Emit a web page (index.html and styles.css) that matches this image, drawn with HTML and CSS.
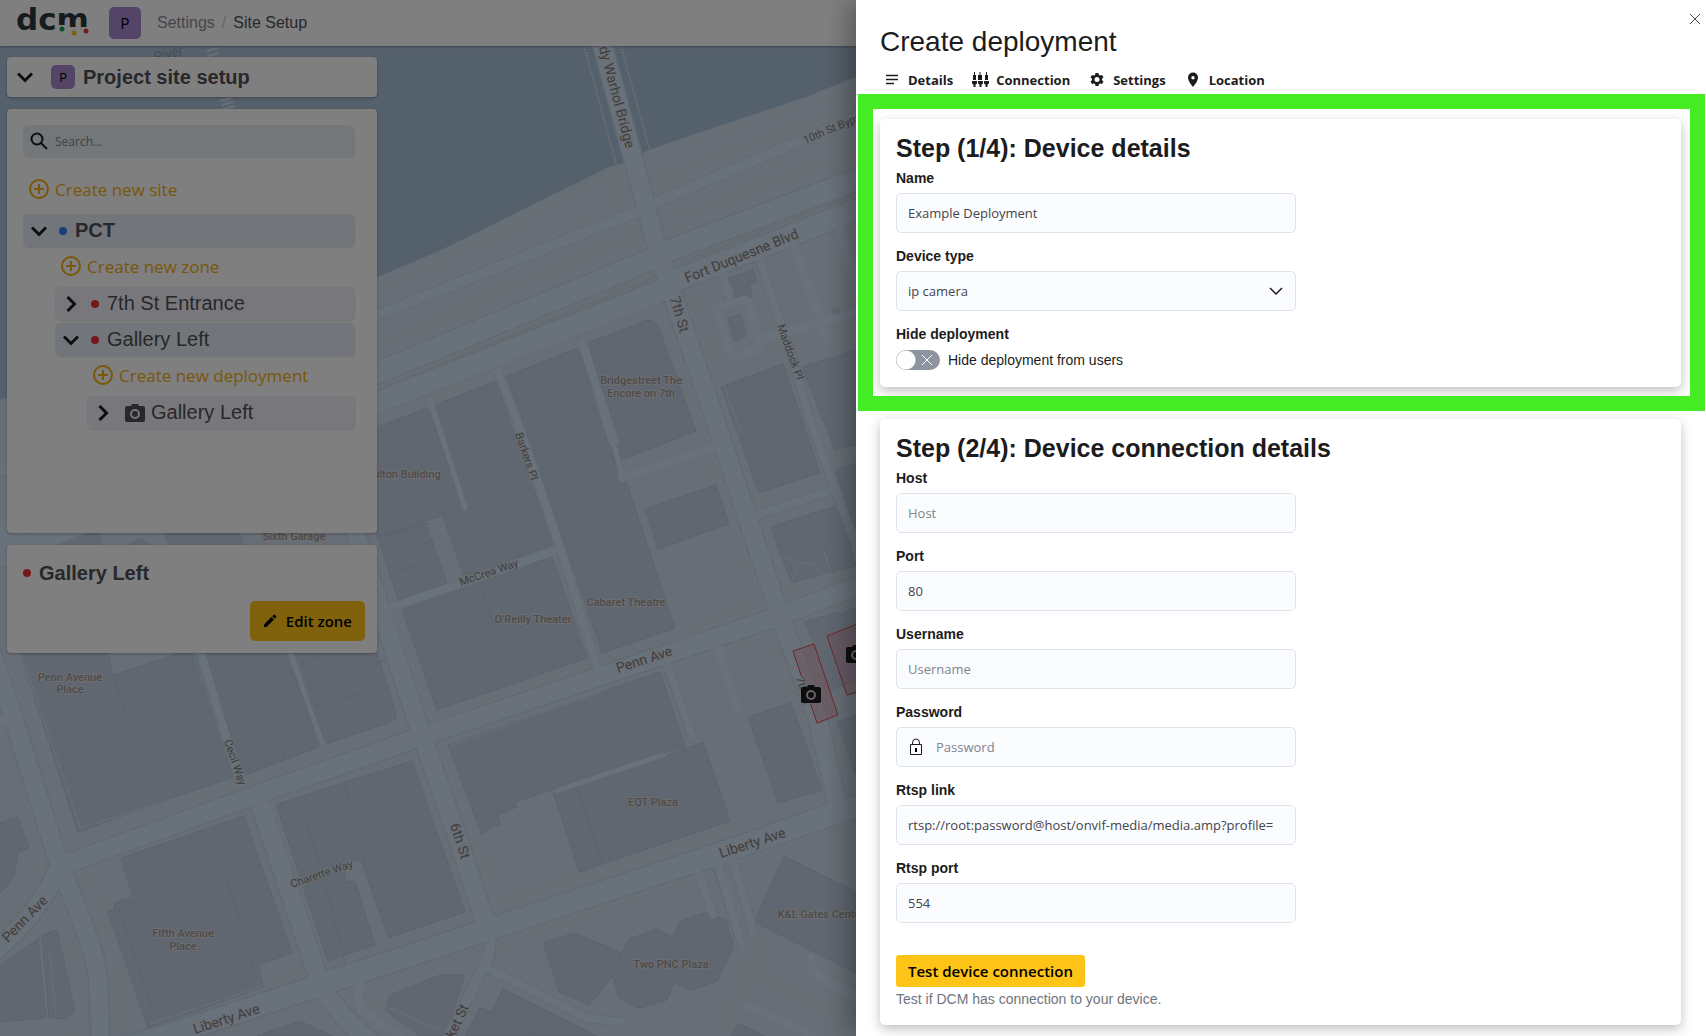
FILE: index.html
```html
<!DOCTYPE html>
<html lang="en">
<head>
<meta charset="utf-8">
<meta name="viewport" content="width=device-width, initial-scale=1">
<title>Site Setup</title>
<link rel="stylesheet" href="styles.css">
</head>
<body>
<div class="app">
  <header class="topbar">
    <a href="#" class="logo" aria-label="dcm home">
      <svg width="76" height="36" viewBox="0 0 76 36">
        <text class="logo-text" x="0" y="25">dcm</text>
        <path class="logo-gap" d="M42 20h9v8h-9ZM53 22h9v6h-9ZM65 22h10v6h-10Z"/>
        <circle cx="46" cy="24" r="2.500" fill="#17a04c"/>
        <circle cx="58" cy="28" r="2.500" fill="#f0c419"/>
        <circle cx="70" cy="26" r="2.500" fill="#e63b3b"/>
      </svg>
    </a>
    <span class="avatar">P</span>
    <nav class="crumbs" aria-label="Breadcrumb">
      <a href="#">Settings</a><span class="slash">/</span><a href="#" class="current">Site Setup</a>
    </nav>
  </header>

  <main class="stage">
    <svg class="map" viewBox="0 46 1706 990" preserveAspectRatio="xMinYMin slice" role="img" aria-label="Site map">
      <rect class="land" x="0" y="46" width="1706" height="990"/>
      <path class="water" d="M0 400 377 277 437 252 607 168 623 163 643 153 677 140 803 98 856 77 1000 20 0 20Z"/>
      <g class="buildings">
        <path d="M377 427 428 408 464 508 377 537Z"/>
        <path d="M378 537 425 522 447 583 398 600Z"/>
        <path d="M433 406 496 381 553 545 464 576 443 517 467 508Z"/>
        <path d="M507 376 578 348 612 447 610 452 618 468 627 483 675 628 602 653Z"/>
        <path d="M587 343 638 324Q650 315 658 326L696 431 616 462 610 452 621 443Z"/>
        <path d="M721 387 783 364 820 473 759 493Z"/>
        <path d="M802 367 856 350 856 445 835 450Z"/>
        <path d="M645 509 716 485 729 524 658 549Z"/>
        <path d="M402 610 552 557 587 658 437 710Z"/>
        <path d="M771 527 823 510 837 506 856 565 832 573 827 555 817 536 778 548Z"/>
        <path d="M778 548 817 535 829 572 792 583Z"/>
        <path d="M835 470 856 463 856 530Z"/>
        <path d="M805 622 837 612 840 614 856 608 856 680 830 690Z"/>
        <path d="M448 745 660 672 685 747 663 753 515 802 517 807 498 815 501 825 490 828 482 835Z"/>
        <path d="M553 792 613 772 663 757 703 742 730 821 579 872Z"/>
        <path d="M748 717 791 703 822 790 778 803Z"/>
        <path d="M837 722 856 715 856 775Z"/>
        <path d="M290 653 377 653 396 713Q397 720 390 722L327 744Z"/>
        <path d="M203 653 286 653 321 746 245 775Z"/>
        <path d="M20 653 108 653 113 675 180 653 191 653 233 777 78 832Z"/>
        <path d="M276 804 412 761 465 912 388 938 361 859 345 866 345 882 355 881 375 945 328 961Z"/>
        <path d="M121 858 244 816 292 953 258 965 264 987 148 1028 108 912 115 909 114 903 133 897Z"/>
        <path d="M0 823 18 817 29 848 17 853Q18 880 0 893Z"/>
        <path d="M42 935 57 930 75 1011 63 1019 49 1017Z"/>
        <path d="M0 965Q50 930 38 940L46 1018 0 1022Z"/>
        <path d="M543 943 574 933 622 953 613 976 589 1005 559 992Z"/>
        <path d="M622 953 629 939 657 929 673 937 679 922 707 912 726 920 734 947 717 981 690 990 674 983 667 1000 639 1008 619 998 613 976Z"/>
        <path d="M784 856 856 892 856 973 754 922Z"/>
        <path d="M503 989 597 1036 465 1036 480 1008 491 1012Z"/>
        <path d="M738 1023 765 1036 731 1036Z"/>
        <path d="M257 1036 300 1021 333 1036Z"/>
        <path d="M390 995 440 975 465 975 445 1036 420 1036 385 1010Z"/>
        <path d="M20 548 66 534 100 534 100 548Z"/>
        <path d="M122 548 140 538 154 548Z"/>
        <path d="M165 534 240 534 245 548 170 548Z"/>
        <path d="M724 295 750 286 752 296 727 302ZM728 278 753 270 757 282 734 290Z"/>
        <path d="M728 318 740 314 747 336 734 341ZM831 311 838 308 840 313 834 315Z"/>
      </g>
      <g class="plots">
        <path d="M538 470 612 444M578 577 648 553M443 517 530 488M480 583 514 681M113 675 158 805M248 653 285 760M298 801 322 870 349 980M344 783 370 855M384 537 430 523M388 555 434 540M394 572 440 558M300 662 377 640M307 684 385 660M315 707 390 685M577 784 602 864M118 908 225 872 255 972 152 1010ZM745 450 803 430M820 420 856 408M491 1012 540 1036"/>
      </g>
      <g class="casing">
        <path class="w22" d="M-10 537 377 373 650 260 670 250 856 180 980 135M-10 560 377 403 663 290 677 280 856 210 980 165"/>
        <path class="w22" d="M100 1056 227 1016 320 985 430 949 487 930 730 850 830 815 900 792"/>
        <path class="w18" d="M590 0 603 47 657 247 670 287 715 420 777 607 818 720 837 803"/>
        <path class="w18" d="M250 210 357 537 395 653 420 730 455 830 487 927"/>
        <path class="w18" d="M60 866 250 797 420 737 643 662 777 617 900 570M-18 625 10 707 57 857Q86 930 95 960 100 980 100 1046M62 860Q40 915 -10 955M257 795 320 983Q332 1010 380 1050"/>
        <path class="w11" d="M-10 475 377 315 637 212M657 202 856 117 900 98"/>
        <path class="w8" d="M498 373 517 420 560 547 597 667M393 607 557 550M197 653 240 783M810 420 856 547M760 260 793 360 810 420M667 667 692 735M697 873 713 915M717 867 742 945M733 862 753 930M757 515 833 490M487 968 587 1018 620 1022"/>
        <path class="w11" d="M490 940Q492 955 483 967L445 1046"/>
      </g>
      <g class="roads">
        <path class="w8" d="M498 373 517 420 560 547 597 667M393 607 557 550M197 640 240 783M666 662 692 735M716 642 738 710M583 343 613 443M622 478 718 446M757 515 833 490M760 260 793 360 810 420 837 493 858 550M795 247 828 342M722 272 731 303M717 307 743 300Q748 299 749 303L760 342Q761 348 756 350L736 356Q731 357 730 352L717 312ZM760 340 858 312M697 870 713 915M717 862 742 945M732 858 753 930M487 968 587 1018 620 1022M810 957Q810 972 820 978L860 998M750 1007 813 1036M361 983Q354 1000 362 1010L404 1040M-10 725 16 715"/>
        <path class="w5" d="M430 400 437 420 465 508M556 791 663 755M291 653 322 744M615 448 622 478"/>
        <path class="w11" d="M840 230 862 300M490 935Q492 955 483 967L445 1046M-10 475 377 315 637 212M657 202 856 117 900 98"/>
        <path class="w18" d="M60 866 250 797 420 737 643 662 777 617 900 570M-18 625 10 707 57 857Q86 930 95 960 100 980 100 1046M62 860Q40 915 -10 955M257 795 320 983Q332 1010 380 1050M250 210 357 537 395 653 420 730 455 830 487 927"/>
        <path class="w18" d="M590 0 603 47 657 247 670 287 715 420 777 607 818 720 837 803"/>
        <path class="w22" d="M-10 537 377 373 650 260 670 250 856 180 980 135M-10 560 377 403 663 290 677 280 856 210 980 165M100 1056 227 1016 320 985 430 949 487 930 730 850 830 815 900 792"/>
      </g>
      <path class="median" d="M377 390 655 277M678 264 856 194"/>
      <g class="paths">
        <path d="M584 46 616 163 634 250M621 46 650 151 661 195M377 287 440 262 620 169M645 152 856 86M377 345 620 240M662 177 856 105M668 205 690 213 856 152M377 417 660 303M660 306 697 430M692 300 740 430M708 453 765 605M735 430 788 590M392 612 432 722 590 665M380 745 610 672 760 602M450 746 600 692M22 655 80 828 230 782M270 803 328 970M275 803 415 757M440 745 495 905 730 830M500 940 700 875M90 870 128 1036M50 955 56 1018M62 900 75 960 78 1036M150 1024 265 985 310 970M788 617 840 780M800 620 856 600M753 930 758 950 720 1036M752 970 840 1020M782 555 797 565 792 585M797 562 815 565 823 575M378 1003 440 1030"/>
      </g>
      <path class="steps" d="M207 51 218 48M208 56 219 53M220 101 231 98M222 105 233 102M223 109 235 106"/>
      <g class="zones">
        <path d="M793 651 814 644 838 715 817 723Z"/>
        <path d="M827 636 880 615 900 680 847 695Z"/>
      </g>
      <g class="street big">
        <text text-anchor="end" transform="translate(626 149) rotate(75)">Andy Warhol Bridge</text>
        <text transform="translate(687 283) rotate(-22)">Fort Duquesne Blvd</text>
        <text transform="translate(670 298) rotate(74)">7th St</text>
        <text transform="translate(618 673) rotate(-18)">Penn Ave</text>
        <text transform="translate(8 943) rotate(-46)">Penn Ave</text>
        <text transform="translate(195 1034) rotate(-18)">Liberty Ave</text>
        <text transform="translate(721 858) rotate(-18)">Liberty Ave</text>
        <text transform="translate(450 825) rotate(72)">6th St</text>
        <text text-anchor="end" transform="translate(469 1007) rotate(-65)">Market St</text>
      </g>
      <g class="street">
        <text transform="translate(805 144) rotate(-23)">10th St Bypass</text>
        <text transform="translate(777 326) rotate(70)">Maddock Pl</text>
        <text transform="translate(515 434) rotate(71)">Barkers Pl</text>
        <text transform="translate(461 586) rotate(-19)">McCrea Way</text>
        <text transform="translate(224 741) rotate(71)">Cecil Way</text>
        <text transform="translate(292 888) rotate(-19)">Charette Way</text>
        <text transform="translate(796 678) rotate(72)">7th St</text>
      </g>
      <g class="place">
        <text x="641" y="384">Bridgestreet The</text><text x="641" y="397">Encore on 7th</text>
        <text x="404" y="478">Fulton Building</text>
        <text x="626" y="606">Cabaret Theatre</text>
        <text x="533" y="623">O’Reilly Theater</text>
        <text x="70" y="681">Penn Avenue</text><text x="70" y="693">Place</text>
        <text x="183" y="937">Fifth Avenue</text><text x="183" y="950">Place</text>
        <text x="653" y="806">EQT Plaza</text>
        <text x="671" y="968">Two PNC Plaza</text>
        <text x="821" y="918">K&amp;L Gates Center</text>
        <text x="294" y="540">Sixth Garage</text>
      </g>
      <text class="river" transform="translate(155 62) rotate(-14)">River</text>
      <g class="pins">
        <path d="M803 687h4l1-2h6l1 2h4a2 2 0 0 1 2 2v12a2 2 0 0 1-2 2h-16a2 2 0 0 1-2-2v-12a2 2 0 0 1 2-2Z"/>
        <circle cx="811" cy="695" r="4"/>
        <path d="M848 647h4l1-2h6l1 2h4a2 2 0 0 1 2 2v12a2 2 0 0 1-2 2h-16a2 2 0 0 1-2-2v-12a2 2 0 0 1 2-2Z"/>
        <circle cx="856" cy="655" r="4"/>
      </g>
    </svg>

    <aside class="sidebar">
      <section class="panel project">
        <button class="chev" aria-label="Collapse project"><svg width="16" height="16" viewBox="0 0 16 16"><path d="M1 4.500 8 11.500 15 4.500"/></svg></button>
        <span class="avatar small">P</span>
        <h1 class="heading">Project site setup</h1>
      </section>

      <section class="panel tree">
        <label class="search">
          <svg width="18" height="18" viewBox="0 0 18 18"><circle cx="7" cy="7" r="5.500"/><path d="M11 11 17 17"/></svg>
          <input type="search" placeholder="Search..." aria-label="Search">
        </label>
        <button class="create top"><svg width="20" height="20" viewBox="0 0 20 20"><circle cx="10" cy="10" r="9"/><path d="M10 5v10M5 10h10"/></svg>Create new site</button>
        <ul class="branch">
          <li>
            <button class="row open strong"><svg class="arrow" width="16" height="16" viewBox="0 0 16 16"><path d="M1 4.500 8 11.500 15 4.500"/></svg><i class="dot blue"></i>PCT</button>
            <ul class="branch nested">
              <li><button class="create"><svg width="20" height="20" viewBox="0 0 20 20"><circle cx="10" cy="10" r="9"/><path d="M10 5v10M5 10h10"/></svg>Create new zone</button></li>
              <li><button class="row"><svg class="arrow" width="16" height="16" viewBox="0 0 16 16"><path d="M4.500 1 11.500 8 4.500 15"/></svg><i class="dot"></i>7th St Entrance</button></li>
              <li>
                <button class="row open"><svg class="arrow" width="16" height="16" viewBox="0 0 16 16"><path d="M1 4.500 8 11.500 15 4.500"/></svg><i class="dot"></i>Gallery Left</button>
                <ul class="branch nested">
                  <li><button class="create"><svg width="20" height="20" viewBox="0 0 20 20"><circle cx="10" cy="10" r="9"/><path d="M10 5v10M5 10h10"/></svg>Create new deployment</button></li>
                  <li><button class="row device"><svg class="arrow" width="16" height="16" viewBox="0 0 16 16"><path d="M4.500 1 11.500 8 4.500 15"/></svg><svg class="camera" width="20" height="18" viewBox="0 0 20 18"><path fill-rule="evenodd" d="M2 2h4l1-2h6l1 2h4a2 2 0 0 1 2 2v12a2 2 0 0 1-2 2H2a2 2 0 0 1-2-2V4a2 2 0 0 1 2-2Zm8 3a5 5 0 1 0 0 10 5 5 0 0 0 0-10Zm0 2a3 3 0 1 1 0 6 3 3 0 0 1 0-6Z"/></svg>Gallery Left</button></li>
                </ul>
              </li>
            </ul>
          </li>
        </ul>
      </section>

      <section class="panel zone">
        <h2 class="heading"><i class="dot"></i>Gallery Left</h2>
        <button class="btn edit"><svg width="14" height="14" viewBox="0 0 14 14"><path d="M1 10.500 8.500 3l2.500 2.500L3.500 13H1ZM9.300 2.200 10.800.800q.5-.5 1 0l1.400 1.400q.5.500 0 1L11.800 4.700Z"/></svg>Edit zone</button>
      </section>
    </aside>
  </main>
</div>

<div class="scrim"></div>

<section class="drawer" role="dialog" aria-labelledby="drawer-title">
  <button class="close" aria-label="Close"><svg width="12" height="12" viewBox="0 0 12 12"><path d="M1 1 11 11M11 1 1 11"/></svg></button>
  <h2 class="drawer-title" id="drawer-title">Create deployment</h2>
  <nav class="tabs" aria-label="Steps">
    <a href="#details"><svg width="20" height="16" viewBox="0 0 20 16"><path fill="none" stroke="currentColor" stroke-width="1.400" d="M4 3.500h12M4 7.500h12M4 11.500h8"/></svg>Details</a>
    <a href="#connection"><svg width="20" height="16" viewBox="0 0 20 16"><path d="M4 0h1v3h1v5H3V3h1ZM9.500 0h1v3h1.500v5H8V3h1.500ZM16 0h1v3h1v5h-3V3h1ZM2 9h5v2q0 1-1.500 1.500V15h-2v-2.500Q2 12 2 11ZM8 9h5v2q0 1-1.500 1.500V15h-2v-2.500Q8 12 8 11ZM14 9h5v2q0 1-1.500 1.500V15h-2v-2.500Q14 12 14 11Z"/></svg>Connection</a>
    <a href="#settings"><svg width="20" height="16" viewBox="0 0 20 16"><path fill-rule="evenodd" d="M8.500 1h3l.4 1.900 1.300.7 1.800-.7 1.500 2.600-1.500 1.200v1.600l1.500 1.200-1.500 2.600-1.800-.7-1.300.7-.4 1.900h-3l-.4-1.900-1.300-.7-1.800.7-1.500-2.600L5 8.300V6.700L3.500 5.500 5 2.900l1.800.7 1.300-.7ZM10 5a2.500 2.500 0 1 0 0 5 2.500 2.500 0 0 0 0-5Z"/></svg>Settings</a>
    <a href="#location"><svg width="20" height="16" viewBox="0 0 20 16"><path fill-rule="evenodd" d="M10 0.500a5 5 0 0 1 5 5Q15 9 10 15 5 9 5 5.500a5 5 0 0 1 5-5Zm0 3.500a1.700 1.700 0 1 0 0 3.400 1.700 1.700 0 0 0 0-3.400Z"/></svg>Location</a>
  </nav>
  <form class="steps-form">
    <section class="card" id="details">
      <h3>Step (1/4): Device details</h3>
      <div class="field"><label for="name">Name</label><input id="name" type="text" value="Example Deployment"></div>
      <div class="field"><label for="type">Device type</label>
        <div class="select"><select id="type"><option>ip camera</option></select><svg width="14" height="10" viewBox="0 0 14 10"><path stroke-width="1.500" d="M1 2 7 8 13 2"/></svg></div>
      </div>
      <div class="field"><span class="label">Hide deployment</span>
        <label class="switch"><span class="track"><input type="checkbox"><svg width="12" height="12" viewBox="0 0 12 12"><path d="M1 1 11 11M11 1 1 11"/></svg></span>Hide deployment from users</label>
      </div>
      <div class="highlight"></div>
    </section>
    <section class="card" id="connection">
      <h3>Step (2/4): Device connection details</h3>
      <div class="field"><label for="host">Host</label><input id="host" type="text" placeholder="Host"></div>
      <div class="field"><label for="port">Port</label><input id="port" type="text" value="80"></div>
      <div class="field"><label for="user">Username</label><input id="user" type="text" placeholder="Username"></div>
      <div class="field"><label for="pass">Password</label>
        <div class="secret"><svg width="14" height="18" viewBox="0 0 14 18"><path fill="none" stroke="currentColor" d="M1.500 6.500h11v10h-11ZM3.500 6.500V5Q3.500 1 7 1t3.500 4v1.500"/><rect x="6" y="10" width="2" height="4"/></svg><input id="pass" type="password" placeholder="Password"></div>
      </div>
      <div class="field"><label for="link">Rtsp link</label><input id="link" type="text" value="rtsp://root:password@host/onvif-media/media.amp?profile="></div>
      <div class="field"><label for="rport">Rtsp port</label><input id="rport" type="text" value="554"></div>
      <div class="test"><button type="button" class="btn">Test device connection</button><p>Test if DCM has connection to your device.</p></div>
    </section>
  </form>
</section>
</body>
</html>
```
FILE: styles.css
```css
:root {
  --arial: "Liberation Sans", Arial, sans-serif;
  --ui: "Open Sans", "Noto Sans", sans-serif;
  --ink: #1c1c20;
  --yellow: #fec417;
}
* { box-sizing: border-box; }
body { margin: 0; height: 100vh; overflow: hidden; font-family: var(--arial); font-size: 14px; color: var(--ink); }
button { border: 0; background: none; padding: 0; font: inherit; color: inherit; cursor: pointer; }
a { color: inherit; text-decoration: none; }
h1, h2, h3, p, ul { margin: 0; padding: 0; }
ul { list-style: none; }
svg { display: block; flex: none; }

.app { display: flex; flex-direction: column; height: 100%; }
.topbar { display: flex; align-items: center; height: 46px; padding: 0 16px; background: #fff; position: relative; z-index: 1; box-shadow: 0 1px 2px rgba(60, 60, 80, .4); }
.logo { margin-right: 17px; }
.logo svg { overflow: visible; }
.logo-text { font: 700 31px "DejaVu Sans", sans-serif; fill: #2c363c; }
.logo-gap { fill: #fff; }
.avatar { display: grid; place-items: center; width: 32px; height: 32px; border-radius: 5px; background: #a98bd0; color: #000; font: 14px Inter, sans-serif; }
.avatar.small { width: 24px; height: 24px; font-size: 12px; }
.crumbs { display: flex; gap: 7px; margin-left: 16px; font-size: 16px; color: #8c8c98; }
.slash { color: #c8c8d0; }
.current { color: #50505a; }

.stage { position: relative; flex: 1; min-height: 0; }
.map { position: absolute; inset: 0; width: 100%; height: 100%; }
.land { fill: #cedcea; }
.water { fill: #a9c0d6; }
.buildings path { fill: #c2cee2; stroke: #bac7da; }
.plots path { fill: none; stroke: #b9c5d8; }
.casing path, .roads path { fill: none; stroke-linejoin: round; }
.casing path { stroke: #c0d6e2; }
.roads path { stroke: #d2e2f6; stroke-linecap: round; }
.roads .w22 { stroke-width: 21px; }
.roads .w18 { stroke-width: 18px; }
.roads .w11 { stroke-width: 10px; }
.roads .w8 { stroke-width: 8px; }
.roads .w5 { stroke-width: 5px; }
.casing .w22 { stroke-width: 24px; }
.casing .w18 { stroke-width: 21px; }
.casing .w11 { stroke-width: 12px; }
.casing .w8 { stroke-width: 10px; }
.median { fill: none; stroke: #c8d8e2; stroke-width: 2px; }
.paths path { fill: none; stroke: #d6e0ee; stroke-width: 2px; stroke-dasharray: 2 1; opacity: .8; }
.steps { fill: none; stroke: #d6e0ee; stroke-width: 2px; }
.zones path { fill: rgba(230, 120, 140, .3); stroke: #e04a58; }
.map text { font-family: Roboto, sans-serif; paint-order: stroke; stroke: #d6dfe8; stroke-width: 2px; stroke-linejoin: round; fill: #807c7c; }
.street { font-size: 11px; }
.big { font-size: 14px; }
.place { font-size: 11px; font-weight: 500; text-anchor: middle; }
.map .place text { fill: #9c9694; stroke: #d8dce2; }
.map .river { font-size: 14px; font-style: italic; fill: #8c9ea8; stroke: none; }
.pins path { fill: #1c1c1c; }
.pins circle { fill: none; stroke: #c8c8d0; stroke-width: 2px; }

.sidebar { position: relative; display: flex; flex-direction: column; gap: 12px; width: 384px; padding: 11px 7px; color: #505054; }
.panel { background: #fff; border-radius: 4px; box-shadow: 0 1px 3px rgba(0, 0, 0, .25); }
.heading { display: flex; align-items: center; font-size: 20px; font-weight: 700; line-height: 24px; }
.project { display: flex; align-items: center; height: 40px; padding: 0 9px; }
.project .avatar { margin: 0 8px 0 17px; }
.chev, .arrow { color: #1c1c20; }
.chev { padding: 0 1px; }
.chev path, .arrow path { fill: none; stroke: currentColor; stroke-width: 3px; }
.tree { padding: 16px 23px 16px 16px; min-height: 424px; }
.search { display: flex; align-items: center; gap: 7px; height: 32px; padding: 0 7px; border-radius: 5px; background: #e6eff5; box-shadow: 1px 1px 2px rgba(0, 0, 0, .1); }
.search svg { color: #1c1c20; fill: none; stroke: currentColor; stroke-width: 2px; }
.search input { flex: 1; min-width: 0; border: 0; padding: 0; background: none; font: 12px var(--ui); outline: 0; }
.search input::placeholder { color: #808088; opacity: 1; }
.create { display: flex; align-items: center; gap: 6px; height: 32px; margin-bottom: 2px; padding-left: 6px; color: #f2ae0c; font: 17px var(--ui); }
.create svg { fill: none; stroke: currentColor; stroke-width: 2px; }
.create.top { margin: 16px 0 9px; }
.branch { display: flex; flex-direction: column; gap: 3px; }
.nested { margin: 3px 0 0 32px; }
.row { display: flex; align-items: center; width: 100%; height: 33px; padding-left: 8px; border-radius: 5px; background: #f0f0f8; font-size: 20px; text-align: left; box-shadow: 1px 1px 2px rgba(0, 0, 0, .12); }
.row.open { background: #e4eaf4; }
.strong { font-weight: 700; }
.row .dot { margin: 0 8px 0 12px; }
.dot { width: 8px; height: 8px; margin-right: 8px; border-radius: 50%; background: #e83038; flex: none; }
.dot.blue { background: #2f80ed; }
.camera { margin: 0 6px 0 14px; fill: #505054; }
.zone { display: flex; flex-direction: column; gap: 16px; padding: 16px 12px 12px 16px; }
.btn { height: 32px; padding: 0 12px; border-radius: 3px; background: var(--yellow); color: #000; font: 600 15px var(--ui); }
.edit { align-self: flex-end; display: flex; align-items: center; gap: 9px; height: 40px; padding: 0 13px; border-radius: 5px; }

.scrim { position: fixed; inset: 0; z-index: 2; background: rgba(0, 0, 0, .5); }

.drawer { position: fixed; inset: 0 0 0 auto; z-index: 3; width: 850px; max-width: 100%; overflow-y: auto; scrollbar-width: none; background: #fff; box-shadow: -8px 0 24px rgba(0, 0, 0, .3); }
.close { position: absolute; top: 13px; right: 5px; }
.close path { stroke: #44444c; fill: none; }
.drawer-title { padding: 26px 24px 0; font-size: 28px; font-weight: 400; line-height: 32px; }
.tabs { display: flex; gap: 17px; align-items: center; height: 37px; padding: 8px 26px 0; border-bottom: 1px solid #dcdce4; font: 700 13px var(--ui); }
.tabs a { display: flex; align-items: center; gap: 6px; }
.tabs svg { fill: currentColor; }
.steps-form { display: flex; flex-direction: column; gap: 32px; padding: 24px 25px 32px 24px; }
.card { position: relative; padding: 16px; border-radius: 5px; box-shadow: 0 4px 12px rgba(0, 0, 0, .25); }
.card h3 { margin-bottom: 7px; font-size: 25px; font-weight: 700; line-height: 26px; }
.field { display: flex; flex-direction: column; gap: 5px; width: 400px; max-width: 100%; }
.field + .field { margin-top: 13px; }
.field > label:first-child, .label { font-weight: 700; line-height: 20px; }
.field input[type=text], .field input[type=password], select { width: 100%; height: 40px; padding: 0 11px; border: 1px solid #e0e3ee; border-radius: 5px; background: #fbfcfe; color: #44444c; font: 13px var(--ui); outline: 0; }
input::placeholder { color: #80848e; opacity: 1; }
.select, .secret { position: relative; }
select { appearance: none; }
.select svg { position: absolute; right: 13px; top: 15px; fill: none; stroke: #1c1c20; pointer-events: none; }
.secret svg { position: absolute; left: 13px; top: 11px; }
.field .secret input { padding-left: 39px; }
.switch { display: flex; align-items: center; gap: 8px; height: 22px; }
.track { position: relative; display: flex; }
.track input { appearance: none; width: 44px; height: 20px; margin: 0; border-radius: 10px; background: radial-gradient(circle at 10px 10px, #fff 9px, #8e93a0 10px); }
.track svg { position: absolute; left: 25px; top: 4px; stroke: #fff; pointer-events: none; }
.test { margin-top: 32px; }
.test p { margin-top: 2px; line-height: 20px; color: #70747e; }
.highlight { position: absolute; inset: -25px -24px -24px -22px; border: 15px solid #44ec24; pointer-events: none; }
```
